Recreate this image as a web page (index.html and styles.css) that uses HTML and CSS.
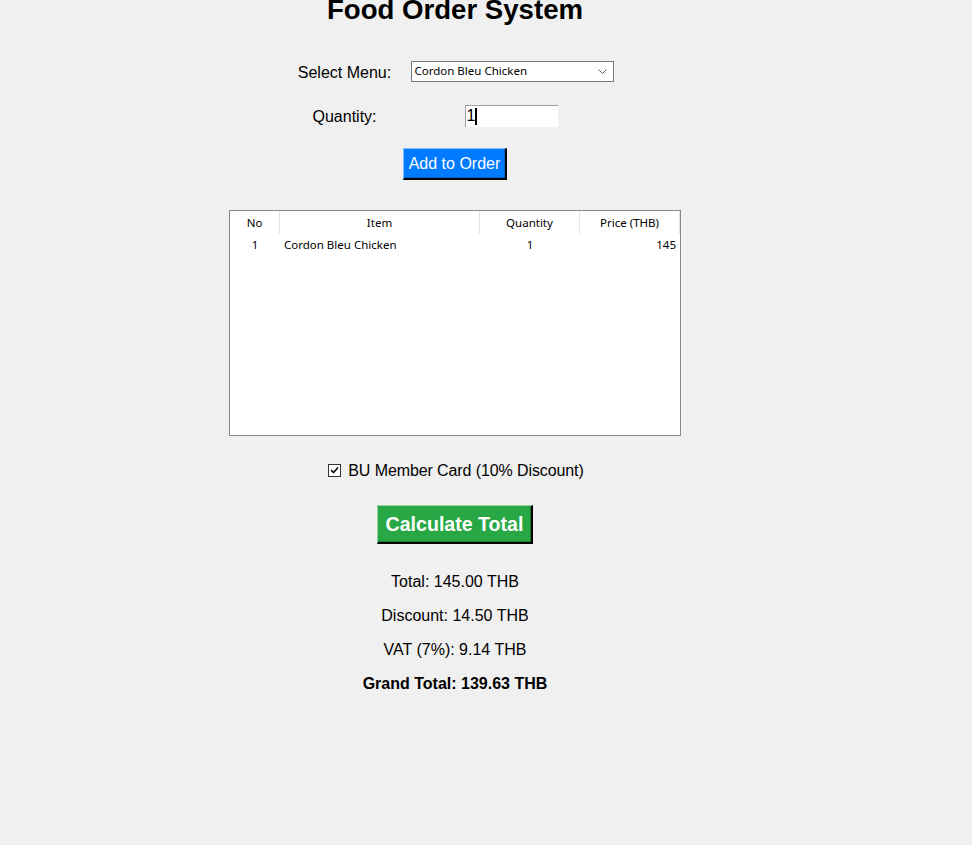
FILE: index.html
```html
<!DOCTYPE html>
<html>
<head>
<meta charset="utf-8">
<link rel="stylesheet" href="styles.css">
</head>
<body>
<div class="app">
  <h1 class="title">Food Order System</h1>

  <div class="form">
    <div class="label">Select Menu:</div>
    <div class="combo">
      <span class="combo-text">Cordon Bleu Chicken</span>
      <svg class="chev" width="9" height="5" viewBox="0 0 9 5"><path d="M0.5 0.5 L4.5 4.5 L8.5 0.5" fill="none" stroke="#606060" stroke-width="1"/></svg>
    </div>
    <div class="label">Quantity:</div>
    <div class="entry"><span class="entry-text">1</span><span class="caret"></span></div>
  </div>

  <button class="btn btn-blue">Add to Order</button>

  <div class="table">
    <div class="thead">
      <div class="th c-no">No</div>
      <div class="th c-item">Item</div>
      <div class="th c-qty">Quantity</div>
      <div class="th c-price">Price (THB)</div>
    </div>
    <div class="tr">
      <div class="td c-no center">1</div>
      <div class="td c-item left">Cordon Bleu Chicken</div>
      <div class="td c-qty center">1</div>
      <div class="td c-price right">145</div>
    </div>
  </div>

  <div class="check-row">
    <span class="checkbox"><svg width="11" height="11" viewBox="0 0 11 11"><path d="M2 5 L4.5 7.5 L9 2.5" fill="none" stroke="#000" stroke-width="1.6"/></svg></span>
    <span class="check-label">BU Member Card (10% Discount)</span>
  </div>

  <button class="btn btn-green">Calculate Total</button>

  <div class="totals">
    <div class="line">Total: 145.00 THB</div>
    <div class="line">Discount: 14.50 THB</div>
    <div class="line">VAT (7%): 9.14 THB</div>
    <div class="line bold">Grand Total: 139.63 THB</div>
  </div>
</div>
</body>
</html>
```

FILE: styles.css
```css
html, body {
  margin: 0;
  padding: 0;
  background: #f0f0f0;
}
body {
  width: 972px;
  height: 845px;
  overflow: hidden;
  font-family: "Liberation Sans", Arial, sans-serif;
  color: #000;
}
.app {
  width: 910px;
  display: flex;
  flex-direction: column;
  align-items: center;
}
.title {
  margin: -5px 0 0 0;
  font-size: 27.6px;
  line-height: 30px;
  font-weight: bold;
}
.form {
  margin-top: 25px;
  display: grid;
  grid-template-columns: 112px 223px;
  grid-auto-rows: 44px;
  align-items: center;
  justify-items: center;
  font-size: 16px;
  margin-left: 2px;
}
.label {
  font-size: 16px;
  line-height: 18px;
  padding-top: 1px;
}
.combo {
  box-sizing: border-box;
  width: 203px;
  height: 21px;
  background: #fff;
  border: 1px solid #7a7a7a;
  display: flex;
  align-items: center;
  justify-content: space-between;
  padding: 0 6px 0 3px;
  font-family: "Noto Sans", sans-serif;
  font-size: 11.5px;
  margin-top: -2px;
}
.combo-text { line-height: 14px; }
.chev { display: block; }
.entry {
  box-sizing: border-box;
  width: 93px;
  height: 22px;
  background: #fff;
  border-top: 1px solid #a0a0a0;
  border-left: 1px solid #a0a0a0;
  display: flex;
  align-items: center;
  padding-left: 1px;
  margin-left: -2px;
  margin-top: -1px;
  font-size: 16px;
}
.entry-text { line-height: 18px; }
.caret {
  display: inline-block;
  width: 2px;
  height: 17px;
  background: #000;
  margin-left: 0;
}
.btn {
  font-family: "Liberation Sans", Arial, sans-serif;
  color: #fff;
  cursor: pointer;
  box-sizing: border-box;
  padding: 0;
  outline: none;
}
.btn-blue {
  margin-top: 10px;
  width: 104px;
  height: 32px;
  font-size: 16px;
  padding-top: 1px;
  background: #007bff;
  border-style: solid;
  border-width: 1px 2px 2px 1px;
  border-color: #7fbdff #000 #000 #7fbdff;
  box-shadow: inset -1px -1px 0 #0062cc;
}
.btn-green {
  margin-top: 24px;
  width: 156px;
  height: 39px;
  font-size: 19.6px;
  font-weight: bold;
  padding-top: 1px;
  background: #28a745;
  border-style: solid;
  border-width: 1px 2px 2px 1px;
  border-color: #93d3a2 #000 #000 #93d3a2;
  box-shadow: inset -1px -1px 0 #1e7e34;
}
.table {
  margin-top: 30px;
  box-sizing: border-box;
  width: 452px;
  height: 226px;
  background: #fff;
  border: 1px solid #828790;
  font-family: "Noto Sans", sans-serif;
  font-size: 11.5px;
  display: flex;
  flex-direction: column;
}
.thead {
  display: flex;
  height: 23px;
}
.tr {
  display: flex;
  height: 21px;
}
.th {
  box-sizing: border-box;
  text-align: center;
  line-height: 23px;
  border-right: 1px solid #e5e5e5;
  height: 23px;
}
.td {
  box-sizing: border-box;
  line-height: 22px;
  padding: 0 4px;
}
.c-no { width: 50px; }
.c-item { width: 200px; }
.c-qty { width: 100px; }
.c-price { width: 100px; }
.center { text-align: center; }
.left { text-align: left; }
.right { text-align: right; }
.check-row {
  margin-top: 25px;
  height: 20px;
  display: flex;
  align-items: center;
  font-size: 16px;
  margin-left: 2px;
}
.checkbox {
  box-sizing: border-box;
  width: 13px;
  height: 13px;
  background: #fff;
  border: 1px solid #333;
  display: flex;
  align-items: center;
  justify-content: center;
  margin-right: 7px;
  margin-top: -1px;
}
.checkbox svg { display: block; }
.check-label { line-height: 18px; letter-spacing: -0.1px; }
.totals {
  margin-top: 21px;
  display: flex;
  flex-direction: column;
  align-items: center;
  font-size: 16px;
}
.line {
  height: 34px;
  line-height: 34px;
}
.bold { font-weight: bold; }
```
